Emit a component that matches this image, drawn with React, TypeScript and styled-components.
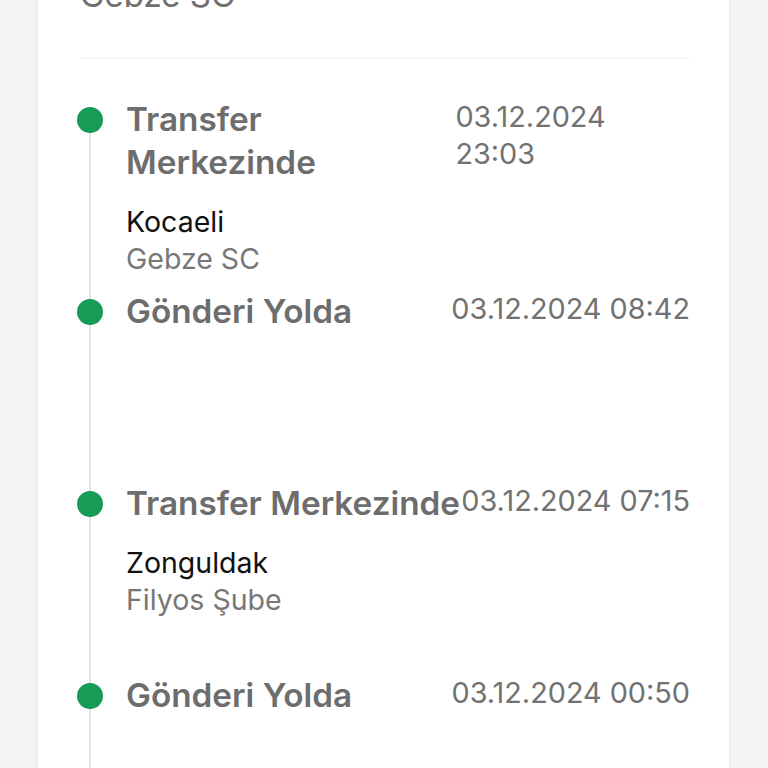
import styled, {createGlobalStyle} from "styled-components";

const GlobalStyle = createGlobalStyle`
  html, body {
    margin: 0;
    padding: 0;
    background: #f3f4f6;
    font-family: Inter, "Noto Sans", sans-serif;
    overflow: hidden;
  }
`

type Step = {
    title: string
    date: string
    city?: string
    branch?: string
}

const steps: Step[] = [
    {title: 'Transfer Merkezinde', date: '03.12.2024 23:03', city: 'Kocaeli', branch: 'Gebze SC'},
    {title: 'Gönderi Yolda', date: '03.12.2024 08:42'},
    {title: 'Transfer Merkezinde', date: '03.12.2024 07:15', city: 'Zonguldak', branch: 'Filyos Şube'},
    {title: 'Gönderi Yolda', date: '03.12.2024 00:50'},
]

const App = () => {
    return (
        <>
            <GlobalStyle/>
            <Page>
                <Card>
                    <Origin>Gebze SC</Origin>
                    <Divider/>
                    <Timeline>
                        {steps.map((s, i) => (
                            <Item key={i}>
                                <Rail $first={i === 0}>
                                    <Dot/>
                                </Rail>
                                <Body>
                                    <Head>
                                        <Title>{s.title}</Title>
                                        <Time>{s.date}</Time>
                                    </Head>
                                    {s.city ?
                                        <Place>
                                            <City>{s.city}</City>
                                            <Branch>{s.branch}</Branch>
                                        </Place> : null}
                                </Body>
                            </Item>
                        ))}
                    </Timeline>
                </Card>
            </Page>
        </>
    )
}

const Page = styled.div`
  height: 768px;
  overflow: hidden;
`
const Card = styled.div`
  margin-left: 37px;
  width: 693px;
  box-sizing: border-box;
  background: #fff;
  border-right: 1px solid #ebebeb;
  border-left: 1px solid #ebebeb;
  box-shadow: 0 0 3px rgba(0, 0, 0, 0.06);
  padding: 0 39px 0 42px;
  min-height: 900px;
`
const Origin = styled.div`
  margin-top: -25px;
  font-size: 33px;
  line-height: 40px;
  color: #6f6f6f;
`
const Divider = styled.div`
  margin-top: 43px;
  height: 1px;
  background: #f0f0f0;
`
const Timeline = styled.div`
  margin-top: 39px;
  margin-left: -3px;
  display: flex;
  flex-direction: column;
`
const Item = styled.div`
  display: flex;
  height: 192px;
`
const Rail = styled.div<{ $first?: boolean }>`
  width: 26px;
  flex: none;
  background: linear-gradient(#e3e3e3, #e3e3e3) no-repeat;
  background-size: 2px ${p => p.$first ? 'calc(100% - 22px)' : '100%'};
  background-position: 12px bottom;
`
const Dot = styled.div`
  margin-top: 9px;
  width: 26px;
  height: 26px;
  border-radius: 50%;
  background: #179c55;
`
const Body = styled.div`
  flex: 1;
  min-width: 0;
  margin-left: 23px;
`
const Head = styled.div`
  display: flex;
  justify-content: space-between;
`
const Title = styled.div`
  font-size: 33.3px;
  line-height: 43px;
  font-weight: 600;
  color: #6d6d6d;
`
const Time = styled.div`
  font-size: 28.8px;
  line-height: 37px;
  color: #727272;
`
const Place = styled.div`
  margin-top: 19px;
  font-size: 28.5px;
  line-height: 37px;
`
const City = styled.div`
  color: #111;
`
const Branch = styled.div`
  color: #777;
`

export default App
